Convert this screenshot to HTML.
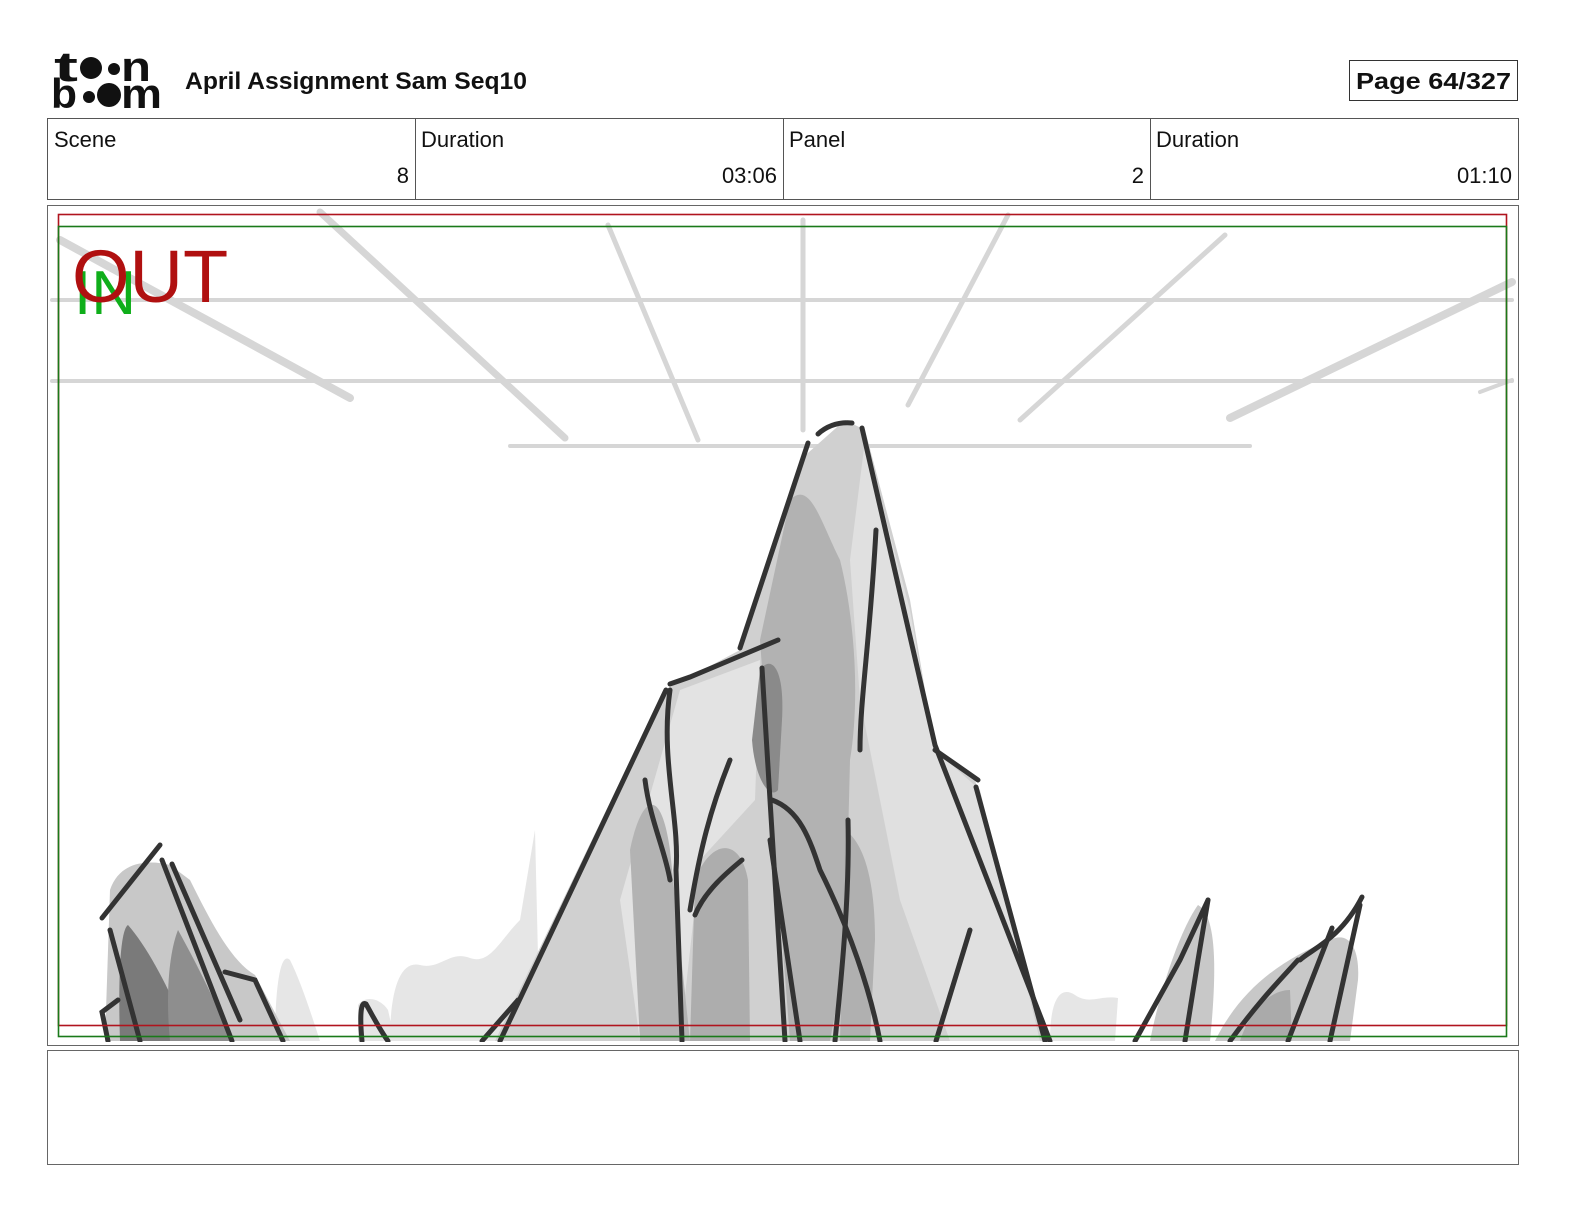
<!DOCTYPE html>
<html><head><meta charset="utf-8"><style>
html,body{margin:0;padding:0;background:#fff;width:1584px;height:1224px;overflow:hidden;font-family:"Liberation Sans",sans-serif;}
.abs{position:absolute}
</style></head><body>
<svg class="abs" style="left:0;top:0" width="1584" height="1224" viewBox="0 0 1584 1224">
<!-- logo -->
<g fill="#111" font-family="Liberation Sans" font-weight="bold">
<text x="54" y="81" font-size="42" textLength="24" lengthAdjust="spacingAndGlyphs">t</text>
<circle cx="91" cy="68" r="11"/><circle cx="114" cy="69" r="6"/>
<text x="121" y="81" font-size="42" textLength="30" lengthAdjust="spacingAndGlyphs">n</text>
<text x="51" y="108" font-size="42" textLength="26" lengthAdjust="spacingAndGlyphs">b</text>
<circle cx="89" cy="97" r="6"/><circle cx="109" cy="95" r="12"/>
<text x="121" y="108" font-size="42" textLength="41" lengthAdjust="spacingAndGlyphs">m</text>
</g>
<text x="185" y="89" font-family="Liberation Sans" font-weight="bold" font-size="24" fill="#111" textLength="342" lengthAdjust="spacingAndGlyphs">April Assignment Sam Seq10</text>
<rect x="1349.5" y="60.5" width="168" height="40" fill="none" stroke="#333"/>
<text x="1356" y="89" font-family="Liberation Sans" font-weight="bold" font-size="23" fill="#111" textLength="155" lengthAdjust="spacingAndGlyphs">Page  64/327</text>
<!-- info table -->
<g stroke="#555" fill="none"><rect x="47.5" y="118.5" width="1471" height="81"/>
<line x1="415.5" y1="118" x2="415.5" y2="200"/><line x1="783.5" y1="118" x2="783.5" y2="200"/><line x1="1150.5" y1="118" x2="1150.5" y2="200"/></g>
<g font-family="Liberation Sans" font-size="22" fill="#111">
<text x="54" y="147">Scene</text><text x="409" y="183" text-anchor="end">8</text>
<text x="421" y="147">Duration</text><text x="777" y="183" text-anchor="end">03:06</text>
<text x="789" y="147">Panel</text><text x="1144" y="183" text-anchor="end">2</text>
<text x="1156" y="147">Duration</text><text x="1512" y="183" text-anchor="end">01:10</text>
</g>
<rect x="47.5" y="205.5" width="1471" height="840" fill="none" stroke="#666"/>
<rect x="47.5" y="1050.5" width="1471" height="114" fill="none" stroke="#666"/>
<defs><clipPath id="c"><rect x="48" y="206" width="1470" height="836"/></clipPath></defs>
<g clip-path="url(#c)">
<g stroke="#d6d6d6" stroke-linecap="round" fill="none">
<line x1="52" y1="381" x2="1512" y2="381" stroke-width="4"/>
<line x1="52" y1="300" x2="1512" y2="300" stroke-width="4"/>
<line x1="510" y1="446" x2="1250" y2="446" stroke-width="4"/>
<path d="M60 240 L350 398" stroke-width="8"/>
<path d="M320 212 L565 438" stroke-width="7"/>
<path d="M608 225 L698 440" stroke-width="5"/>
<path d="M803 220 L803 430" stroke-width="5"/>
<path d="M1008 215 L908 405" stroke-width="5"/>
<path d="M1225 235 L1020 420" stroke-width="5"/>
<path d="M1512 282 L1230 418" stroke-width="8"/>
<path d="M1512 380 L1480 392" stroke-width="4"/>
</g>
<g fill="#e6e6e6">
<path d="M390 1041 C390 990 400 960 420 965 C440 970 450 950 470 958 C490 965 500 940 520 920 L535 830 L540 1041Z"/>
<path d="M275 1041 C275 990 280 950 290 960 C300 980 310 1010 320 1041Z"/>
<path d="M1050 1041 C1050 1000 1060 985 1075 995 C1090 1005 1100 995 1118 998 L1115 1041Z"/>
<path d="M358 1041 L358 1005 C365 995 380 998 388 1010 L395 1041Z"/>
</g>
<path d="M495 1041 L640 740 L665 690 L740 650 L800 460 L845 420 L865 430 L910 600 L935 750 L975 780 L1045 1041Z" fill="#d0d0d0"/>
<path d="M680 690 L760 660 L755 800 L700 860 L680 1041 L640 1041 L620 900Z" fill="#e3e3e3"/>
<path d="M865 440 L910 610 L935 750 L980 790 L1040 1041 L950 1041 L900 900 L860 700 L850 560Z" fill="#e0e0e0"/>
<path d="M790 500 C810 480 820 520 840 560 C855 620 860 700 850 760 L845 960 L830 1041 L790 1041 L770 780 L760 640Z" fill="#b2b2b2"/>
<path d="M760 670 C770 655 785 665 782 720 L778 790 C770 800 755 780 752 740Z" fill="#8a8a8a"/>
<path d="M640 1041 L630 850 C640 800 660 780 670 850 L690 1041Z" fill="#b3b3b3"/>
<path d="M690 1041 L695 880 C710 840 740 835 748 880 L750 1041Z" fill="#adadad"/>
<path d="M845 830 C860 840 875 870 875 940 L870 1041 L840 1041Z" fill="#b0b0b0"/>
<path d="M105 1041 L110 890 C120 860 150 860 170 865 L190 880 C210 920 230 960 255 975 L290 1041Z" fill="#c8c8c8"/>
<path d="M120 1041 C118 980 120 930 128 925 C150 950 175 1000 190 1041Z" fill="#7a7a7a"/>
<path d="M170 1041 C165 990 170 950 178 930 C200 970 220 1010 230 1041Z" fill="#8e8e8e"/>
<path d="M1150 1041 C1160 990 1180 930 1198 905 C1215 915 1218 960 1210 1041Z" fill="#c8c8c8"/>
<path d="M1215 1041 C1240 990 1280 960 1330 940 C1350 930 1360 950 1358 980 L1350 1041Z" fill="#c8c8c8"/>
<path d="M1240 1041 C1250 1010 1270 990 1290 990 L1292 1041Z" fill="#aaaaaa"/>
<g stroke="#333" stroke-width="5" stroke-linecap="round" fill="none">
<path d="M818 434 C828 425 840 422 852 423"/>
<path d="M808 443 L740 648"/>
<path d="M862 428 L935 745 L1050 1041"/>
<path d="M876 530 C870 640 860 700 860 750"/>
<path d="M935 750 L978 780"/>
<path d="M976 787 L1045 1041"/>
<path d="M936 1041 L970 930"/>
<path d="M778 640 L690 677 L670 684"/>
<path d="M666 690 L500 1041"/>
<path d="M670 690 C660 760 680 820 676 870 L682 1041"/>
<path d="M645 780 C650 820 665 850 670 880"/>
<path d="M762 668 L770 800 L785 1041"/>
<path d="M772 800 C800 810 810 840 820 870 C850 930 870 990 880 1041"/>
<path d="M835 1041 C840 990 850 900 848 820"/>
<path d="M770 840 L800 1041"/>
<path d="M730 760 C710 810 700 850 690 910"/>
<path d="M742 860 C730 870 705 890 695 915"/>
<path d="M160 845 L102 918"/>
<path d="M110 930 L140 1041"/>
<path d="M162 860 L232 1041"/>
<path d="M172 864 L240 1020"/>
<path d="M225 972 L255 980 L283 1041"/>
<path d="M118 1000 L102 1012 L108 1041"/>
<path d="M362 1041 C360 1020 360 1000 366 1004 C375 1020 380 1030 388 1041"/>
<path d="M482 1041 L518 1000"/>
<path d="M1135 1041 L1180 960 L1208 900"/>
<path d="M1208 900 L1198 960 L1185 1041"/>
<path d="M1230 1041 C1260 1000 1280 980 1298 960"/>
<path d="M1300 960 C1310 950 1340 940 1362 897"/>
<path d="M1360 905 L1330 1041"/>
<path d="M1332 928 L1288 1041"/>
</g>
</g>
<rect x="58.5" y="214.5" width="1448" height="811" fill="none" stroke="#b0141e" stroke-width="1.6"/>
<rect x="58.5" y="226.5" width="1448" height="810" fill="none" stroke="#1a7a1a" stroke-width="1.6"/>
<text x="74" y="314" font-family="Liberation Sans" font-size="62" fill="#0fae1a">IN</text>
<text x="72" y="302" font-family="Liberation Sans" font-size="74" fill="#b01010">OUT</text>
</svg>
</body></html>
